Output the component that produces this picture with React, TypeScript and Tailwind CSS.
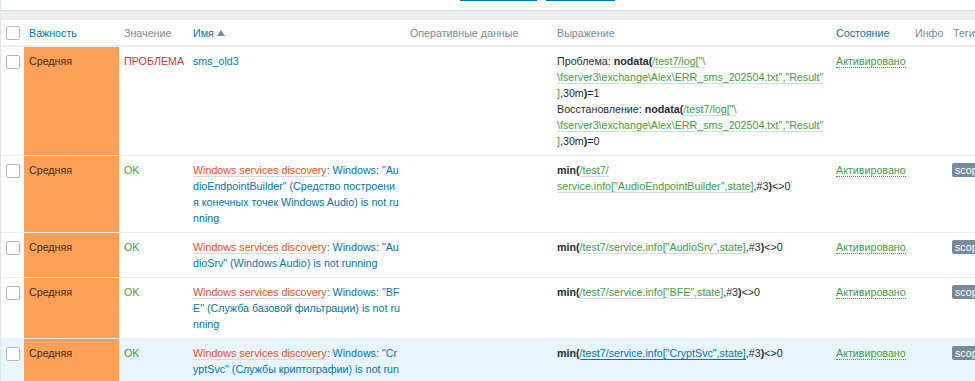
import type { ReactNode } from "react"

interface TriggerRow {
  value: "ПРОБЛЕМА" | "OK"
  name: ReactNode
  expression: ReactNode
  tag?: string
  hovered?: boolean
}

const cols =
  "grid grid-cols-[23px_95px_69px_217px_147px_279px_79px_38px_150px]"

function Checkbox() {
  return (
    <span className="block w-[14px] h-[14px] rounded-[2px] border border-[#acbbc2] bg-white" />
  )
}

function ItemLink({ children, hover }: { children: ReactNode; hover?: boolean }) {
  return (
    <span
      className={
        hover
          ? "text-[#0275b8] border-b border-[#0275b8]"
          : "text-[#429e47] border-b border-[#d4dce0]"
      }>
      {children}
    </span>
  )
}

function LldName({ text }: { text: string }) {
  return (
    <>
      <span className="text-[#f24f1d] border-b border-[#d4dce0]">
        Windows services discovery
      </span>
      <span className="text-[#0275b8]">: {text}</span>
    </>
  )
}

function MinExpr({ svc, hover }: { svc: string; hover?: boolean }) {
  return (
    <>
      <b>min(</b>
      <ItemLink hover={hover}>
        /test7/
        <wbr />
        service.info["{svc}",state]
      </ItemLink>
      ,#3
      <b>)</b>
      {"\u2060"}&lt;&gt;0
    </>
  )
}

// path breaks the same way the original page wraps it
function LogKey() {
  return (
    <ItemLink>
      /test7/log["\
      <wbr />
      \fserver3\exchange\Alex\ERR_sms_202504.txt","Result"
      <wbr />]
    </ItemLink>
  )
}

const rows: TriggerRow[] = [
  {
    value: "ПРОБЛЕМА",
    name: <span className="text-[#0275b8]">sms_old3</span>,
    expression: (
      <>
        <div>
          Проблема: <b>nodata(</b>
          <LogKey />,30m<b>)</b>=1
        </div>
        <div>
          Восстановление: <b>nodata(</b>
          <LogKey />,30m<b>)</b>=0
        </div>
      </>
    ),
  },
  {
    value: "OK",
    name: (
      <LldName text='Windows: "AudioEndpointBuilder" (Средство построения конечных точек Windows Audio) is not running' />
    ),
    expression: <MinExpr svc="AudioEndpointBuilder" />,
    tag: "scope: availability",
  },
  {
    value: "OK",
    name: <LldName text='Windows: "AudioSrv" (Windows Audio) is not running' />,
    expression: <MinExpr svc="AudioSrv" />,
    tag: "scope: availability",
  },
  {
    value: "OK",
    name: (
      <LldName text='Windows: "BFE" (Служба базовой фильтрации) is not running' />
    ),
    expression: <MinExpr svc="BFE" />,
    tag: "scope: availability",
  },
  {
    value: "OK",
    name: (
      <LldName text='Windows: "CryptSvc" (Службы криптографии) is not running' />
    ),
    expression: <MinExpr svc="CryptSvc" hover />,
    tag: "scope: availability",
    hovered: true,
  },
]

export default function App() {
  return (
    <div
      className="w-[975px] h-[381px] overflow-hidden bg-[#ebeef0] text-[10.7px] leading-4 text-[#1f2c33]"
      style={{ fontFamily: '"Liberation Sans", Arial, sans-serif' }}>
      <div className="h-[11px] bg-white border-l border-b border-[#dfe4e7] flex gap-[9px] pl-[459px]">
        <div className="w-[77px] h-px bg-[#0275b8]" />
        <div className="w-[69px] h-px bg-[#0275b8]" />
      </div>

      <div className="mt-[9px] bg-white border-l border-[#dfe4e7] w-[1100px]">
        <div className={`${cols} h-[27px] items-center border-b-2 border-[#ebeef0] text-[#768d99]`}>
          <div className="pl-[5px]">
            <Checkbox />
          </div>
          <div className="px-[5px] text-[#0275b8]">Важность</div>
          <div className="px-[5px]">Значение</div>
          <div className="px-[5px] text-[#0275b8] flex items-center gap-[3px]">
            Имя
            <span className="w-0 h-0 border-x-[4px] border-x-transparent border-b-[6px] border-b-[#768d99]" />
          </div>
          <div className="px-[5px]">Оперативные данные</div>
          <div className="px-[5px]">Выражение</div>
          <div className="px-[5px] text-[#0275b8]">Состояние</div>
          <div className="px-[5px]">Инфо</div>
          <div className="px-[5px]">Теги</div>
        </div>

        {rows.map((r, i) => (
          <div
            key={i}
            className={`${cols} border-b border-[#ebeef0] ${r.hovered ? "bg-[#e8f5ff]" : ""}`}>
            <div className="pl-[5px] pt-[8px]">
              <Checkbox />
            </div>
            <div className="px-[5px] py-[6px] bg-[#ffa059] text-[#3d2a1c]">Средняя</div>
            <div
              className={`px-[5px] py-[6px] ${r.value === "OK" ? "text-[#429e47]" : "text-[#e33734]"}`}>
              {r.value}
            </div>
            <div className="px-[5px] py-[6px] break-all">{r.name}</div>
            <div className="px-[5px] py-[6px]" />
            <div className="pl-[5px] pr-[2px] py-[6px] break-words">{r.expression}</div>
            <div className="px-[5px] py-[6px]">
              <span className="text-[#429e47] border-b border-dotted border-[#429e47]">
                Активировано
              </span>
            </div>
            <div className="px-[5px] py-[6px]" />
            <div className="pl-[4px] py-[6px]">
              {r.tag && (
                <span className="inline-block whitespace-nowrap bg-[#768d99] text-white rounded-[2px] px-[3px] leading-[14px] mt-px">
                  {r.tag}
                </span>
              )}
            </div>
          </div>
        ))}
      </div>
    </div>
  )
}
